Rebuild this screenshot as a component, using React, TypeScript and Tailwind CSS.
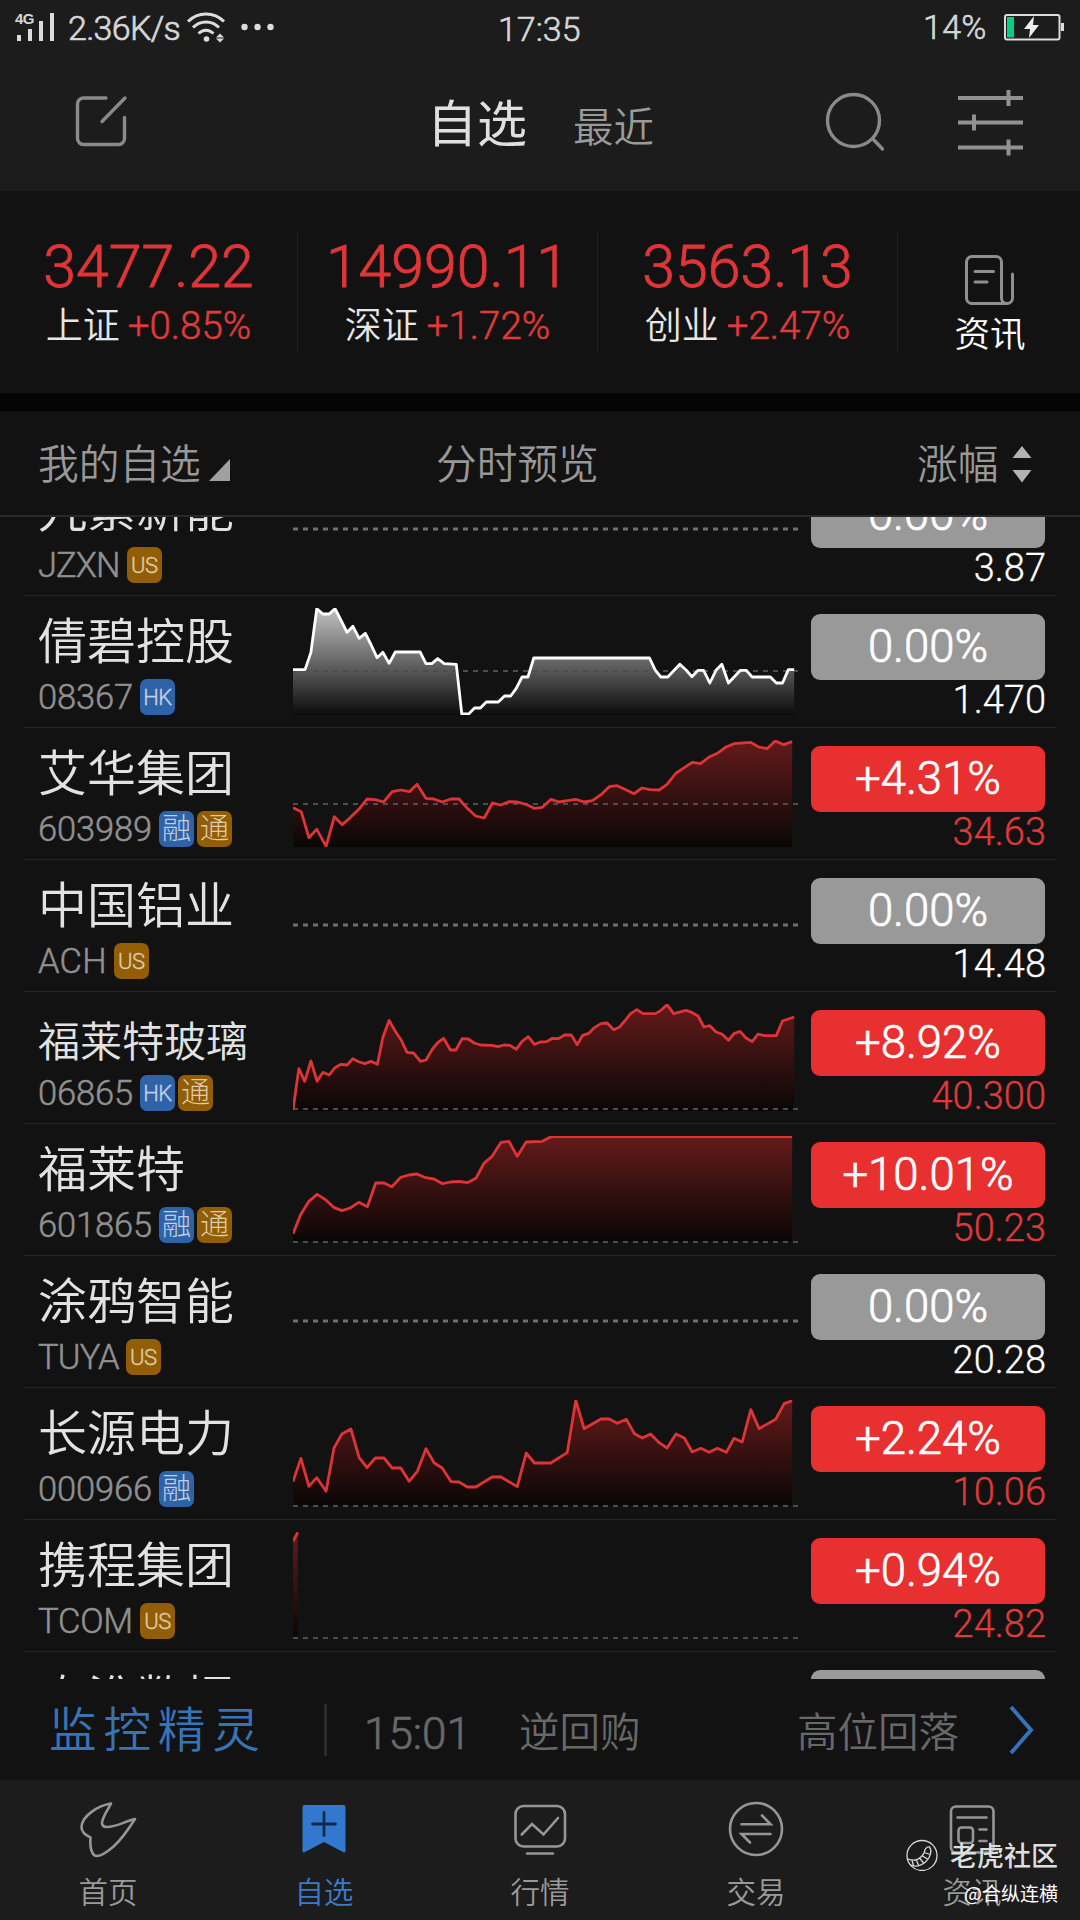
import React from "react";

type Tag = "US" | "HK" | "融" | "通";

type Chart = {
  originY: number;
  top: number;
  bottom: number;
  right: number;
  tone: "white" | "red";
  base: number;
  points: string;
};

type Stock = {
  name: string;
  code: string;
  codeClass?: string;
  nameClass?: string;
  tags: Tag[];
  change: string;
  price: string;
  up: boolean;
  chart?: Chart;
};

const cjk = "font-['Noto_Sans_CJK_SC',sans-serif]";

const stocks: Stock[] = [
  { name: "九紫新能", code: "JZXN", codeClass: "tracking-[-0.9px]", tags: ["US"], change: "0.00%", price: "3.87", up: false },
  {
    name: "倩碧控股",
    code: "08367",
    tags: ["HK"],
    change: "0.00%",
    price: "1.470",
    up: false,
    chart: {
      originY: 18, top: 54, bottom: 375, right: 1522, tone: "white", base: 243,
      points:
        "67,239 102,239 119,187 136,56 154,72 172,72 189,56 206,90 224,127 241,109 259,145 277,130 294,165 311,203 328,187 346,220 364,186 436,186 453,221 470,221 487,206 506,221 541,223 557,372 577,372 594,354 611,354 628,336 663,336 681,318 699,318 715,295 732,261 749,261 766,204 1102,204 1119,241 1135,261 1155,261 1190,223 1208,240 1225,260 1243,241 1259,241 1277,279 1295,241 1312,223 1331,279 1366,241 1383,241 1400,261 1453,261 1470,279 1488,279 1505,239 1522,239",
    },
  },
  {
    name: "艾华集团",
    code: "603989",
    tags: ["融", "通"],
    change: "+4.31%",
    price: "34.63",
    up: true,
    chart: {
      originY: 414, top: 450, bottom: 771, right: 1516, tone: "red", base: 642,
      points:
        "67,653 91,665 113,743 136,718 163,769 187,680 210,704 234,682 258,658 282,627 306,629 330,636 355,605 380,600 405,605 427,583 453,625 476,627 500,636 525,627 549,627 573,655 597,678 622,684 646,639 670,645 695,635 718,636 743,643 767,655 791,652 816,628 839,636 863,632 888,628 912,636 936,632 961,614 985,590 1008,587 1033,599 1057,611 1080,594 1104,599 1130,600 1153,583 1179,549 1203,533 1226,517 1250,521 1275,501 1299,490 1324,471 1347,461 1396,457 1419,471 1443,476 1467,453 1492,464 1516,455",
    },
  },
  { name: "中国铝业", code: "ACH", codeClass: "tracking-[0.2px]", tags: ["US"], change: "0.00%", price: "14.48", up: false },
  {
    name: "福莱特玻璃",
    code: "06865",
    tags: ["HK", "通"],
    change: "+8.92%",
    price: "40.300",
    up: true,
    chart: {
      originY: 36, top: 72, bottom: 393, right: 1522, tone: "red", base: 387,
      points:
        "67,390 84,266 101,304 119,243 137,304 154,277 172,285 189,263 206,253 224,255 241,236 259,246 276,251 293,244 312,253 328,172 346,121 363,152 381,180 398,217 417,219 437,244 453,240 472,207 488,187 504,175 524,210 540,210 558,176 576,177 593,189 611,195 645,196 662,200 680,195 697,196 715,208 732,184 750,170 768,193 785,186 803,185 820,175 838,176 855,165 875,165 892,194 908,166 926,160 943,142 961,131 979,129 998,149 1014,142 1030,123 1047,101 1065,89 1083,101 1119,101 1135,91 1153,74 1172,101 1208,91 1226,98 1243,108 1260,141 1277,137 1295,156 1312,162 1331,181 1347,161 1365,154 1382,174 1400,185 1417,162 1435,167 1470,167 1488,123 1522,111",
    },
  },
  {
    name: "福莱特",
    code: "601865",
    tags: ["融", "通"],
    change: "+10.01%",
    price: "50.23",
    up: true,
    chart: {
      originY: 432, top: 468, bottom: 785, right: 1516, tone: "red", base: 786,
      points:
        "67,761 89,704 113,664 137,643 160,658 185,682 209,692 233,684 258,667 283,680 307,609 331,609 354,620 380,592 403,585 427,582 452,593 476,597 501,611 524,606 549,604 573,608 598,595 622,549 645,529 671,487 694,484 718,529 744,486 791,484 816,470 1516,470",
    },
  },
  { name: "涂鸦智能", code: "TUYA", codeClass: "tracking-[-0.8px]", tags: ["US"], change: "0.00%", price: "20.28", up: false },
  {
    name: "长源电力",
    code: "000966",
    tags: ["融"],
    change: "+2.24%",
    price: "10.06",
    up: true,
    chart: {
      originY: 54, top: 90, bottom: 408, right: 1516, tone: "red", base: 408,
      points:
        "67,335 90,265 113,349 136,323 163,364 186,234 209,192 235,177 259,263 282,293 306,264 331,264 355,294 380,294 404,334 428,304 453,236 477,279 500,294 526,335 549,336 573,351 598,351 645,321 671,321 718,350 744,249 768,279 815,279 863,248 888,91 912,176 961,147 985,147 1008,160 1035,148 1058,191 1081,204 1105,192 1130,218 1153,234 1179,192 1203,204 1226,246 1251,235 1275,247 1299,235 1325,247 1347,205 1371,216 1396,119 1420,176 1468,148 1493,101 1516,92",
    },
  },
  {
    name: "携程集团",
    code: "TCOM",
    codeClass: "tracking-[-0.2px]",
    tags: ["US"],
    change: "+0.94%",
    price: "24.82",
    up: true,
    chart: {
      originY: 450, top: 486, bottom: 804, right: 81, tone: "red", base: 804,
      points: "67,514 81,487",
    },
  },
  { name: "秦淮数据", nameClass: "pt-px", code: "CD", tags: ["US"], change: "0.00%", price: "15.00", up: false },
];

function Sparkline({ chart, id }: { chart?: Chart; id: string }) {
  if (!chart) {
    return (
      <svg className="h-[131px] w-[505px] shrink-0" viewBox="0 0 505 131">
        <path d="M0 65H505" stroke="#6e6e6e" strokeWidth="3" strokeDasharray="5 5" />
      </svg>
    );
  }
  const red = chart.tone === "red";
  return (
    <svg
      className="h-[131px] w-[505px] shrink-0"
      viewBox={`67 ${chart.originY} 1466 393`}
      preserveAspectRatio="none"
    >
      <defs>
        <linearGradient id={id} gradientUnits="userSpaceOnUse" x1="0" x2="0" y1={chart.top} y2={chart.bottom}>
          <stop offset="0" stopColor={red ? "#641a1a" : "#c2c2c2"} />
          <stop offset="1" stopColor={red ? "#090706" : "#0b0b0b"} />
        </linearGradient>
        <clipPath id={`${id}-clip`}>
          <rect x="67" y={chart.top} width="1466" height={chart.bottom - chart.top} />
        </clipPath>
      </defs>
      <polygon
        points={`67,${chart.bottom} ${chart.points} ${chart.right},${chart.bottom}`}
        fill={`url(#${id})`}
      />
      <path
        d={`M67 ${chart.base}H1533`}
        stroke="#4d4d4d"
        strokeWidth="2"
        strokeDasharray="5 5"
        vectorEffect="non-scaling-stroke"
      />
      <polyline
        points={chart.points}
        fill="none"
        stroke={red ? "#de3437" : "#ffffff"}
        strokeWidth="2.8"
        strokeLinejoin="round"
        vectorEffect="non-scaling-stroke"
        clipPath={`url(#${id}-clip)`}
      />
    </svg>
  );
}

function MarketTag({ tag }: { tag: Tag }) {
  const blue = tag === "HK" || tag === "融";
  const latin = tag === "HK" || tag === "US";
  return (
    <span
      className={`flex h-[36px] w-[35px] items-center justify-center rounded-[7px] leading-none ${
        blue ? "bg-[#2f63a8] text-[#c3d0e3]" : "bg-[#925d05] text-[#dfcba6]"
      } ${latin ? "pt-px text-[22px] font-light tracking-[-0.5px] [-webkit-text-stroke:0.4px]" : "text-[29px] font-light"}`}
    >
      {tag}
    </span>
  );
}

function StockRow({ stock, id }: { stock: Stock; id: string }) {
  const longName = stock.name.length > 4;
  return (
    <li className="ml-[23px] flex h-[132px] w-[1033px] shrink-0 border-b border-[#262626]">
      <div className="w-[270px] shrink-0 pl-[15px]">
        <div
          className={`mt-[17px] h-[50px] whitespace-nowrap font-[350] text-[#e2e2e2] ${cjk} ${
            longName ? "text-[42px] leading-[59px]" : "text-[49px] leading-[50px]"
          } ${stock.nameClass ?? ""}`}
        >
          {stock.name}
        </div>
        <div className="mt-[16px] flex h-[36px] items-center gap-[3px] text-[34.5px] leading-none text-[#909090]">
          <span className={`mr-[4px] font-light [-webkit-text-stroke:0.5px] ${stock.codeClass ?? "tracking-[-0.15px]"}`}>{stock.code}</span>
          {stock.tags.map((t) => (
            <MarketTag key={t} tag={t} />
          ))}
        </div>
      </div>
      <Sparkline chart={stock.chart} id={id} />
      <div className="ml-[13px] w-[235px] shrink-0">
        <div
          className={`mt-[18px] flex h-[66px] w-[234px] items-center justify-center rounded-[9px] text-[45.5px] font-light leading-none text-white [-webkit-text-stroke:0.7px] ${
            stock.up ? "bg-[#e93030]" : "bg-[#999999]"
          }`}
        >
          {stock.change}
        </div>
        <div
          className={`h-[38px] text-right text-[38px] font-light leading-[40px] [-webkit-text-stroke:0.3px] ${
            stock.up ? "text-[#e03a3a]" : "text-white"
          }`}
        >
          {stock.price}
        </div>
      </div>
    </li>
  );
}

function StatusBar() {
  return (
    <div className="flex h-[56px] items-start text-[34px] font-light leading-[34px] text-[#d6d6d6]">
      <div className="relative ml-[15px] mt-[12px] h-[30px] w-[40px]">
        <svg className="size-full" viewBox="0 0 40 30" fill="#dcdcdc">
          <rect x="2" y="23" width="4" height="6" />
          <rect x="13" y="17" width="4" height="12" />
          <rect x="24" y="9" width="4" height="20" />
          <rect x="35" y="1" width="4" height="28" />
        </svg>
        <span className="absolute left-0 top-0 font-['Liberation_Sans'] text-[15px] font-bold leading-[14px] tracking-[-0.5px]">
          4G
        </span>
      </div>
      <span className="ml-[13px] mt-[11px] w-[117px] whitespace-nowrap tracking-[-0.7px] [-webkit-text-stroke:0.7px]">2.36K/s</span>
      <svg className="ml-[1px] mt-[11px] h-[32px] w-[40px]" viewBox="0 0 40 32" fill="none" stroke="#dcdcdc" strokeWidth="3">
        <path d="M2 10.5C12 .5 28 .5 38 10.5M7 16.5C14 9 26 9 33 16.5M12.500 22.500C17 18 23 18 27.500 22.500" />
        <circle cx="20.500" cy="28" r="2.800" fill="#dcdcdc" stroke="none" />
        <path d="M34 22.500l4 4h-8zM34 31.500l4-4h-8z" fill="#dcdcdc" stroke="none" />
      </svg>
      <svg className="ml-[15px] mt-[23px] h-[8px] w-[34px]" viewBox="0 0 34 8" fill="#dcdcdc">
        <circle cx="3.500" cy="4" r="3.200" />
        <circle cx="16.500" cy="4" r="3.200" />
        <circle cx="29.500" cy="4" r="3.200" />
      </svg>
      <span className="ml-[223px] mt-[12px] w-[90px] [-webkit-text-stroke:0.6px]">17:35</span>
      <span className="ml-[335px] mt-[10px] w-[68px] whitespace-nowrap tracking-[0.3px] [-webkit-text-stroke:0.6px]">14%</span>
      <svg className="ml-[13px] mt-[13px] h-[28px] w-[62px]" viewBox="0 0 62 28">
        <rect x="1" y="2" width="54.500" height="24.500" rx="2" fill="none" stroke="#dcdcdc" strokeWidth="2" />
        <rect x="57" y="10" width="3" height="8" fill="#dcdcdc" />
        <rect x="3" y="4" width="7" height="20.500" fill="#06cf83" />
        <path d="M30 3L20 16h6l-1 9 10-13h-6z" fill="#ededed" />
      </svg>
    </div>
  );
}

function TitleBar() {
  return (
    <div className="flex h-[135px] items-start">
      <svg className="ml-[74px] mt-[38px] h-[55px] w-[55px]" viewBox="0 0 55 55" fill="none" stroke="#8a8a8a" strokeWidth="3.400" strokeLinecap="round">
        <path d="M32 4H9.500a6 6 0 0 0-6 6v34.500a6 6 0 0 0 6 6h35a6 6 0 0 0 6-6V23.500M28 27.500L51 4" />
      </svg>
      <h1 className={`ml-[298px] mt-[39px] w-[108px] whitespace-nowrap text-[50px] font-normal leading-[50px] text-[#e0e0e0] ${cjk}`}>自选</h1>
      <span className={`ml-[38px] mt-[49px] w-[84px] text-[40.5px] font-[350] leading-[40px] text-[#9a9a9a] ${cjk}`}>最近</span>
      <svg className="ml-[168px] mt-[36px] h-[62px] w-[62px]" viewBox="0 0 62 62" fill="none" stroke="#8a8a8a" strokeWidth="3.400" strokeLinecap="round">
        <circle cx="28.500" cy="28.500" r="26" />
        <path d="M47.500 46.500L57.500 57" />
      </svg>
      <svg className="ml-[70px] mt-[31px] h-[70px] w-[68px]" viewBox="0 0 68 70" fill="none" stroke="#919191" strokeWidth="4">
        <path d="M1 11H66M1 35.500H66M1 60.500H66M51.500 3V19M17 27.500V43.500M51.500 52.500V68.500" />
      </svg>
    </div>
  );
}

const indices = [
  { name: "上证", value: "3477.22", change: "+0.85%", box: "w-[298px]" },
  { name: "深证", value: "14990.11", change: "+1.72%", box: "w-[300px]" },
  { name: "创业", value: "3563.13", change: "+2.47%", box: "w-[300px]" },
];

function IndexPanel() {
  return (
    <section className="flex h-[202px] bg-[#121212] pt-[41px]">
      {indices.map((i) => (
        <div key={i.name} className={`h-[120px] border-r border-[#222222] pt-[4px] ${i.box}`}>
          <div className="text-center text-[59px] font-light leading-[61px] text-[#e03538] [-webkit-text-stroke:0.9px]">{i.value}</div>
          <div className="mt-[9px] flex h-[40px] items-center justify-center gap-[8px] leading-none">
            <span className={`-mt-[5px] text-[37px] font-[350] text-[#e6e6e6] ${cjk}`}>{i.name}</span>
            <span className="pt-px text-[38.5px] font-light text-[#e03a3a] [-webkit-text-stroke:0.5px]">{i.change}</span>
          </div>
        </div>
      ))}
      <div className="flex flex-1 flex-col items-center pl-[2px] pt-[22px]">
        <svg className="h-[52px] w-[52px]" viewBox="0 0 52 52" fill="none" stroke="#8f8f8f" strokeWidth="3" strokeLinecap="round">
          <path d="M43 49.500H8a5.500 5.500 0 0 1-5.500-5.500V8A5.500 5.500 0 0 1 8 2.500H32A5.500 5.500 0 0 1 37.500 8V44a5.500 5.500 0 0 0 11 0V20M11 17.500H29.500M11 28H23" />
        </svg>
        <span className={`mt-[8px] text-[35.5px] font-[350] leading-[36px] text-white ${cjk}`}>资讯</span>
      </div>
    </section>
  );
}

function TableHeader() {
  return (
    <div className={`flex h-[106px] items-start border-b-2 border-[#292929] bg-[#121212] pt-[30px] text-[40.7px] font-[350] leading-[41px] text-[#989898] ${cjk}`}>
      <span className="ml-[38px] w-[166px] whitespace-nowrap">我的自选</span>
      <svg className="ml-[5px] mt-[18px] h-[22px] w-[21px]" viewBox="0 0 21 22" fill="#a0a0a0">
        <path d="M21 0V22H0z" />
      </svg>
      <span className="ml-[206px] w-[165px] whitespace-nowrap">分时预览</span>
      <span className="ml-[316px] w-[85px]">涨幅</span>
      <svg className="ml-[10px] mt-[5px] h-[37px] w-[20px]" viewBox="0 0 20 37" fill="#b3b3b3">
        <path d="M10 0l9.500 12H.5zM10 36.500L.5 24h19z" />
      </svg>
    </div>
  );
}

function MonitorBar() {
  return (
    <div className={`flex h-[101px] items-start bg-[#121212] text-[40.5px] font-[350] leading-[41px] text-[#686868] ${cjk}`}>
      <span className="ml-[49px] mt-[24px] w-[221px] whitespace-nowrap text-[47.5px] leading-[48px] tracking-[6.900px] text-[#3873b6]">监控精灵</span>
      <div className="ml-[54px] mt-[25px] h-[52px] w-[3px] bg-[#2b2b2b]" />
      <span className="ml-[37px] mt-[35px] w-[113px] font-['Roboto'] text-[44px] font-light leading-[41px] [-webkit-text-stroke:0.7px]">15:01</span>
      <span className="ml-[42px] mt-[30px] w-[125px]">逆回购</span>
      <span className="ml-[153px] mt-[30px] w-[165px]">高位回落</span>
      <svg className="ml-[47px] mt-[25px] h-[52px] w-[26px]" viewBox="0 0 26 52" fill="none" stroke="#3473b7" strokeWidth="4">
        <path d="M2 3L22 26 2 49" />
      </svg>
    </div>
  );
}

function TabBar() {
  const icon = "h-[60px] w-[64px]";
  const tabs = [
    {
      label: "首页",
      art: (
        <svg className={icon} viewBox="0 0 64 60" fill="none" stroke="#969696" strokeWidth="2.600" strokeLinejoin="round">
          <path d="M35 4.500C22 6.500 6 17 5.500 28C5.500 33 9 36 14.500 38.500C14 45 15 53 18 56C22 60 31 53 37 48C45 41 52 31 59 20C50 22 40 28 31 28C26 28 25 25 27 20C29 14 33 9 35 4.500z" />
        </svg>
      ),
    },
    {
      label: "自选",
      active: true,
      art: (
        <svg className={icon} viewBox="0 0 64 60">
          <path d="M12.500 6H51.500a2 2 0 0 1 2 2V52a1.500 1.500 0 0 1-2 1.300L32 43 12.500 53.300a1.500 1.500 0 0 1-2-1.300V8a2 2 0 0 1 2-2z" fill="#3278cf" />
          <path d="M32 13.500V36.500M20.500 25H43.500" stroke="#102a4c" strokeWidth="2.800" strokeLinecap="round" />
        </svg>
      ),
    },
    {
      label: "行情",
      art: (
        <svg className={icon} viewBox="0 0 64 60" fill="none" stroke="#969696" strokeWidth="2.600" strokeLinecap="round">
          <rect x="7.500" y="7" width="49.500" height="40.500" rx="8" />
          <path d="M13.700 35.500L24 25 35.500 35.500 50 19M19 54.500H45" />
        </svg>
      ),
    },
    {
      label: "交易",
      art: (
        <svg className={icon} viewBox="0 0 64 60" fill="none" stroke="#969696" strokeWidth="2.600" strokeLinecap="round">
          <circle cx="32" cy="30" r="26" />
          <path d="M17.500 25.300H46.500L38 16.500M46.500 35H17.500L26 43.500" />
        </svg>
      ),
    },
    {
      label: "资讯",
      art: (
        <svg className={icon} viewBox="0 0 64 60" fill="none" stroke="#969696" strokeWidth="2.600" strokeLinecap="round">
          <rect x="11" y="7.500" width="42.500" height="46" rx="5" />
          <path d="M17.500 18.500H46.500M39.500 30.500H46.500M39.500 42H46.500" />
          <rect x="18.500" y="28.500" width="14.500" height="15.500" rx="3" />
        </svg>
      ),
    },
  ];
  return (
    <nav className={`relative flex h-[140px] bg-[#1c1c1c] ${cjk}`}>
      {tabs.map((t) => (
        <div key={t.label} className="flex w-[216px] flex-col items-center pt-[19px]">
          {t.art}
          <span className={`mt-[16px] text-[29.5px] font-[350] leading-[30px] ${t.active ? "text-[#3a7bcb]" : "text-[#9a9a9a]"}`}>{t.label}</span>
        </div>
      ))}
      <div className="absolute right-[22px] top-[59px] flex flex-col items-end">
        <div className="flex items-center gap-[12px]">
          <svg className="h-[32px] w-[32px]" viewBox="0 0 32 32" fill="none" stroke="#d8d8d8" strokeWidth="1.300">
            <circle cx="16" cy="16.500" r="15" />
            <path d="M2 20C9 23 15 20 18 14C19 9 21 7.500 23.500 8C26 11 25 18 20 22.500C15 27 9 28 4.500 26M6 21.500l1.500 5M10.500 21.500l2 4.500M14 19.500l3.500 4.500M16.500 17l5 3M18 13.500l6.500 2" />
          </svg>
          <span className="-mt-px text-[27px] font-medium leading-[30px] text-[#dedede]">老虎社区</span>
        </div>
        <span className="mt-[10px] text-[19px] font-normal leading-[24px] text-white">@合纵连横</span>
      </div>
    </nav>
  );
}

export default function App() {
  return (
    <div className="flex h-[1920px] w-[1080px] flex-col overflow-hidden bg-[#121212] font-['Roboto','Noto_Sans_CJK_SC',sans-serif]">
      <header className="h-[191px] shrink-0 bg-[#1c1c1c]">
        <StatusBar />
        <TitleBar />
      </header>
      <IndexPanel />
      <div className="h-[18px] shrink-0 bg-[#050505]" />
      <TableHeader />
      <div className="h-[1162px] shrink-0 overflow-hidden">
        <ul className="-mt-[53px] flex flex-col">
          {stocks.map((s) => (
            <StockRow key={s.name} stock={s} id={`trend-${s.code}`} />
          ))}
        </ul>
      </div>
      <MonitorBar />
      <TabBar />
    </div>
  );
}
